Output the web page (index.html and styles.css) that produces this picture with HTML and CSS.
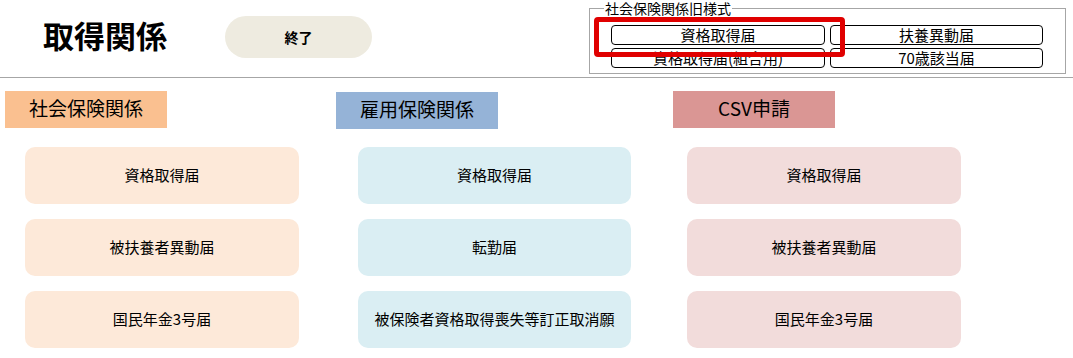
FILE: index.html
```html
<!DOCTYPE html>
<html lang="ja">
<head>
<meta charset="utf-8">
<title>取得関係</title>
<link rel="stylesheet" href="styles.css">
</head>
<body>
<header class="topbar">
  <h1 class="title">取得関係</h1>
  <button class="end-btn">終了</button>
  <fieldset class="legacy">
    <legend class="legacy-legend">社会保険関係旧様式</legend>
    <div class="legacy-grid">
      <button class="legacy-btn">資格取得届</button>
      <button class="legacy-btn">扶養異動届</button>
      <button class="legacy-btn">資格取得届(組合用)</button>
      <button class="legacy-btn">70歳該当届</button>
    </div>
  </fieldset>
  <div class="highlight"></div>
</header>
<main class="sections">
  <section class="col col-shakai">
    <div class="col-head head-shakai">社会保険関係</div>
    <div class="cards cards-shakai">
      <div class="card card-shakai">資格取得届</div>
      <div class="card card-shakai">被扶養者異動届</div>
      <div class="card card-shakai">国民年金3号届</div>
    </div>
  </section>
  <section class="col col-koyo">
    <div class="col-head head-koyo">雇用保険関係</div>
    <div class="cards cards-koyo">
      <div class="card card-koyo">資格取得届</div>
      <div class="card card-koyo">転勤届</div>
      <div class="card card-koyo">被保険者資格取得喪失等訂正取消願</div>
    </div>
  </section>
  <section class="col col-csv">
    <div class="col-head head-csv">CSV申請</div>
    <div class="cards cards-csv">
      <div class="card card-csv">資格取得届</div>
      <div class="card card-csv">被扶養者異動届</div>
      <div class="card card-csv">国民年金3号届</div>
    </div>
  </section>
</main>
</body>
</html>
```
FILE: styles.css
```css
* { box-sizing: border-box; }
html, body {
  margin: 0;
  padding: 0;
  background: #ffffff;
  font-family: "Noto Sans CJK JP", "Noto Sans", sans-serif;
  color: #000;
}
.topbar {
  position: relative;
  display: flex;
  align-items: flex-start;
  height: 78px;
  border-bottom: 1px solid #a6a6a6;
  padding-left: 43px;
}
.title {
  margin: 16px 0 0 0;
  width: 182px;
  font-size: 31px;
  font-weight: 700;
  line-height: 38px;
  letter-spacing: 0;
}
.end-btn {
  margin: 16px 0 0 0;
  width: 147px;
  height: 42px;
  border: none;
  border-radius: 21px;
  background: #eeebe0;
  font-family: "Noto Sans CJK JP", sans-serif;
  font-size: 14px;
  font-weight: 700;
  color: #000;
  padding: 0;
}
.legacy {
  margin: 0 7px 0 auto;
  width: 477px;
  height: 74px;
  border: 1px solid #a6a6a6;
  padding: 0 21px 0 21px;
}
.legacy-legend {
  margin-left: -7px;
  padding: 0 1px;
  font-size: 14px;
  line-height: 16px;
  color: #000;
}
.legacy-grid {
  margin-top: 9px;
  display: grid;
  grid-template-columns: 214px 213px;
  grid-template-rows: 20px 20px;
  column-gap: 5px;
  row-gap: 3px;
}
.legacy-btn {
  border: 1px solid #000;
  border-radius: 4px;
  background: #fff;
  font-family: "Noto Sans CJK JP", sans-serif;
  font-size: 15px;
  line-height: 16px;
  padding: 0;
  color: #000;
}
.highlight {
  position: absolute;
  left: 594px;
  top: 17px;
  width: 251px;
  height: 40px;
  border: 5px solid #e00000;
  border-radius: 4px;
}
.sections {
  display: flex;
  padding-top: 13px;
}
.col {
  display: flex;
  flex-direction: column;
}
.col-shakai { margin-left: 5px; width: 331px; }
.col-koyo { width: 337px; padding-top: 1px; }
.col-csv { width: 300px; }
.col-head {
  width: 162px;
  height: 37px;
  font-size: 19px;
  line-height: 34px;
  text-align: center;
}
.head-shakai { background: #fac090; }
.head-koyo { background: #95b3d7; }
.head-csv { background: #da9694; }
.cards {
  display: flex;
  flex-direction: column;
  gap: 15px;
  margin-top: 19px;
}
.cards-shakai { margin-left: 20px; }
.cards-koyo { margin-left: 22px; margin-top: 18px; }
.cards-csv { margin-left: 14px; }
.card {
  width: 274px;
  height: 57px;
  border-radius: 10px;
  display: flex;
  align-items: center;
  justify-content: center;
  font-size: 15px;
  padding-bottom: 3px;
}
.card-shakai { background: #fde9d9; }
.card-koyo { background: #daeef3; width: 273px; }
.card-csv { background: #f2dcdb; }
```
